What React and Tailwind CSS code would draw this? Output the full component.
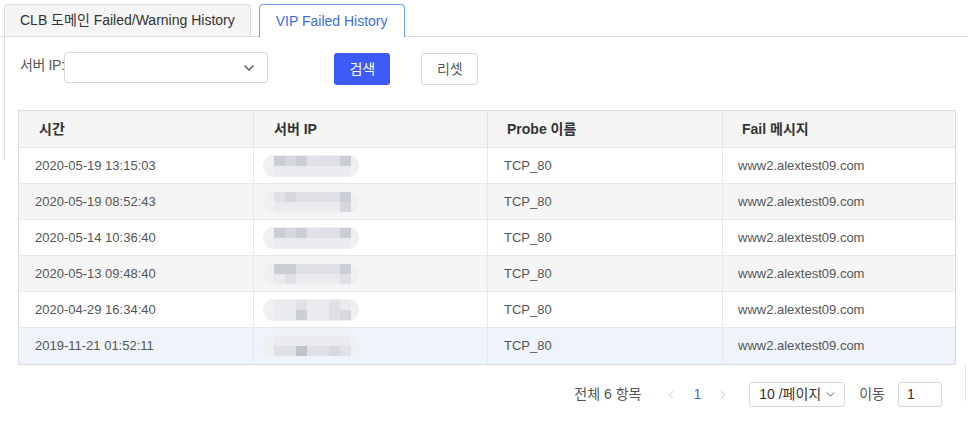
//
// VIP FAILED HISTORY
// ==================
// Tabbed history view: a server IP filter, the failure table and the
// pager underneath it.
//
import { ChevronDown, ChevronLeft, ChevronRight } from "lucide-react";

const FONT = "font-['Liberation_Sans','Noto_Sans_CJK_KR',sans-serif]";

// Masked IP cells: two rows of grey blocks on a soft pill.
const SHADES = {
    a: "bg-[#cbced5]",
    b: "bg-[#d6d8de]",
    c: "bg-[#dfe1e6]",
    d: "bg-[#e9ebee]",
    e: "bg-[#c0c3cb]",
};

const ROWS = [
    { time: "2020-05-19 13:15:03", bg: "bg-white",     mask: ["abaccca", "ddddddd"] },
    { time: "2020-05-19 08:52:43", bg: "bg-[#f5f5f5]", mask: ["cbcccca", "ddddddb"] },
    { time: "2020-05-14 10:36:40", bg: "bg-white",     mask: ["abaccca", "ddddddd"] },
    { time: "2020-05-13 09:48:40", bg: "bg-[#f5f5f5]", mask: ["aacccca", "dcddddc"] },
    { time: "2020-04-29 16:34:40", bg: "bg-white",     mask: ["ddcddcd", "ddaddcb"] },
    { time: "2019-11-21 01:52:11", bg: "bg-[#eef4fa]", mask: ["ddddddd", "cceccbc"] },
];

function MaskedIP({ mask }) {
    return (
        <div className="w-[96px] h-[22px] rounded-full bg-[#eff0f2] flex flex-col justify-center pl-[11px]">
            {mask.map((line, i) => (
                <div key={i} className="flex">
                    {line.split("").map((s, j) => (
                        <div key={j} className={"w-[11px] h-[10px] " + SHADES[s]}></div>
                    ))}
                </div>
            ))}
        </div>
    );
}

function App() {
    const cols = "grid grid-cols-[234px_234px_235px_234px]";

    return (
        <div className={"relative w-[968px] h-[427px] bg-white overflow-hidden text-[#333] " + FONT}>
            {/* tabs */}
            <div className="flex items-end gap-[8px] pl-[4px] pt-[4px] border-b border-[#dcdcdc] h-[37px]">
                <div className="h-[32px] px-[15px] flex items-center text-[14px] text-[#333] bg-[#f5f5f5] border border-b-0 border-[#dcdcdc] rounded-t-[4px]">
                    CLB 도메인 Failed/Warning History
                </div>
                <div className="h-[33px] -mb-px px-[16px] flex items-center text-[14px] text-[#3d6ee0] bg-white border border-b-0 border-[#6aa2f0] rounded-t-[4px]">
                    VIP Failed History
                </div>
            </div>

            {/* panel edges */}
            <div className="absolute left-[4px] top-[37px] w-px h-[123px] bg-[#dcdcdc]"></div>
            <div className="absolute left-[965px] top-[365px] w-px h-[36px] bg-[#e6e6e6]"></div>

            {/* filter */}
            <div className="flex items-start pl-[20px] pt-[15px]">
                <span className="text-[14px] text-[#555] mt-[3px] tracking-[-0.4px]">서버 IP:</span>
                <div className="w-[204px] h-[31px] border border-[#d9d9d9] rounded-[3px] bg-white flex items-center justify-end pr-[10px]">
                    <ChevronDown size={16} strokeWidth={2} className="text-[#555]" />
                </div>
                <button className="ml-[66px] mt-[1px] w-[56px] h-[32px] rounded-[3px] bg-[#3c5bf6] text-white text-[14px]">
                    검색
                </button>
                <button className="ml-[31px] mt-[1px] w-[57px] h-[32px] rounded-[3px] border border-[#d9d9d9] bg-white text-[#555] text-[14px]">
                    리셋
                </button>
            </div>

            {/* table */}
            <div className="ml-[18px] mt-[25px] w-[938px] border border-[#dcdcdc]">
                <div className={cols + " h-[37px] bg-[#f5f5f5] border-b border-[#e3e3e3] text-[14px] font-bold text-[#333]"}>
                    <div className="flex items-center pl-[20px]">시간</div>
                    <div className="flex items-center pl-[20px] border-l border-[#e3e3e3]">서버 IP</div>
                    <div className="flex items-center pl-[19px] border-l border-[#e3e3e3]">Probe 이름</div>
                    <div className="flex items-center pl-[19px] border-l border-[#e3e3e3]">Fail 메시지</div>
                </div>
                {ROWS.map((row, i) => (
                    <div key={i} className={cols + " h-[36px] text-[13px] text-[#555] " + row.bg + (i < ROWS.length - 1 ? " border-b border-[#e8e8e8]" : "")}>
                        <div className="flex items-center pl-[16px]">{row.time}</div>
                        <div className="flex items-center pl-[9px] border-l border-[#e8e8e8]">
                            <MaskedIP mask={row.mask} />
                        </div>
                        <div className="flex items-center pl-[16px] border-l border-[#e8e8e8]">TCP_80</div>
                        <div className="flex items-center pl-[15px] border-l border-[#e8e8e8]">www2.alextest09.com</div>
                    </div>
                ))}
            </div>

            {/* pager */}
            <div className="flex items-center justify-end w-[942px] mt-[17px] text-[14px] text-[#555]">
                <span>전체 6 항목</span>
                <ChevronLeft size={14} strokeWidth={1.5} className="ml-[23px] text-[#c0c0c0]" />
                <span className="ml-[15px] text-[#3d6ee0]">1</span>
                <ChevronRight size={14} strokeWidth={1.5} className="ml-[15px] text-[#c0c0c0]" />
                <div className="ml-[19px] w-[96px] h-[25px] border border-[#d9d9d9] rounded-[3px] flex items-center pl-[9px] text-[#333]">
                    10 /페이지
                    <ChevronDown size={13} strokeWidth={1.5} className="ml-[3px]" />
                </div>
                <span className="ml-[14px]">이동</span>
                <div className="ml-[13px] w-[44px] h-[25px] border border-[#d9d9d9] rounded-[3px] flex items-center pl-[8px] text-[#333]">
                    1
                </div>
            </div>
        </div>
    );
}
export default App
